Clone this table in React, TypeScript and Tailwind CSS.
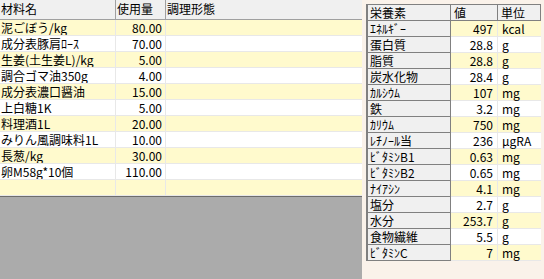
import React from "react";

const ingredients: [string, string][] = [
  ["泥ごぼう/kg", "80.00"],
  ["成分表豚肩ﾛｰｽ", "70.00"],
  ["生姜(土生姜L)/kg", "5.00"],
  ["調合ゴマ油350g", "4.00"],
  ["成分表濃口醤油", "15.00"],
  ["上白糖1K", "5.00"],
  ["料理酒1L", "20.00"],
  ["みりん風調味料1L", "10.00"],
  ["長葱/kg", "30.00"],
  ["卵M58g*10個", "110.00"],
  ["", ""],
];

const nutrients: [string, string, string][] = [
  ["ｴﾈﾙｷﾞｰ", "497", "kcal"],
  ["蛋白質", "28.8", "g"],
  ["脂質", "28.8", "g"],
  ["炭水化物", "28.4", "g"],
  ["ｶﾙｼｳﾑ", "107", "mg"],
  ["鉄", "3.2", "mg"],
  ["ｶﾘｳﾑ", "750", "mg"],
  ["ﾚﾁﾉｰﾙ当", "236", "μgRA"],
  ["ﾋﾞﾀﾐﾝB1", "0.63", "mg"],
  ["ﾋﾞﾀﾐﾝB2", "0.65", "mg"],
  ["ﾅｲｱｼﾝ", "4.1", "mg"],
  ["塩分", "2.7", "g"],
  ["水分", "253.7", "g"],
  ["食物繊維", "5.5", "g"],
  ["ﾋﾞﾀﾐﾝC", "7", "mg"],
];

export default function App() {
  return (
    <div
      className="w-[544px] h-[279px] flex overflow-hidden text-[12px] leading-[15px] text-black"
      style={{ fontFamily: '"Noto Sans CJK JP", "Noto Sans", sans-serif' }}
    >
      {/* Left ingredients grid */}
      <div className="w-[362px] flex flex-col bg-[#ababab]">
        <div className="grid grid-cols-[116px_50px_1fr] h-[20px] bg-[#f0f0f0] border-b border-[#a0a0a0]">
          <div className="pl-[1px] pt-[1px] border-r border-[#a0a0a0]">材料名</div>
          <div className="pl-[1px] pt-[1px] border-r border-[#a0a0a0]">使用量</div>
          <div className="pl-[1px] pt-[1px]">調理形態</div>
        </div>
        {ingredients.map(([name, amt], i) => (
          <div
            key={i}
            className={`grid grid-cols-[116px_50px_1fr] h-[16px] border-b border-[#e8e8e8] ${
              i % 2 === 0 ? "bg-[#fffacd]" : "bg-white"
            }`}
          >
            <div className="pl-[1px] border-r border-[#e8e8e8] whitespace-nowrap overflow-hidden">{name}</div>
            <div className="pr-[3px] text-right border-r border-[#e8e8e8]">{amt}</div>
            <div></div>
          </div>
        ))}
        <div className="flex-1 border-t border-[#6d6d6d] bg-[#ababab]"></div>
      </div>

      {/* Right nutrients panel */}
      <div className="flex-1 bg-[#faf2ea] pl-[4px] pt-[4px]">
        <div className="w-[175px] border-l-2 border-t border-[#808080]">
          <div className="grid grid-cols-[83px_47px_1fr] h-[16px] bg-[#f0f0f0] border-b border-[#808080]">
            <div className="pl-[2px] border-r border-[#808080]">栄養素</div>
            <div className="pl-[3px] border-r border-[#808080]">値</div>
            <div className="pl-[3px] border-r border-[#808080]">単位</div>
          </div>
          {nutrients.map(([name, val, unit], i) => (
            <div
              key={i}
              className={`grid grid-cols-[83px_47px_1fr] h-[16px] border-b border-[#e8e8e8] ${
                i % 2 === 0 ? "bg-[#fffacd]" : "bg-white"
              }`}
            >
              <div className="pl-[2px] bg-[#f0f0f0] border-r border-b border-[#808080] -mb-px whitespace-nowrap">
                {name}
              </div>
              <div className="pr-[4px] text-right border-r border-[#e8e8e8]">{val}</div>
              <div className="pl-[4px]">{unit}</div>
            </div>
          ))}
        </div>
      </div>
    </div>
  );
}
